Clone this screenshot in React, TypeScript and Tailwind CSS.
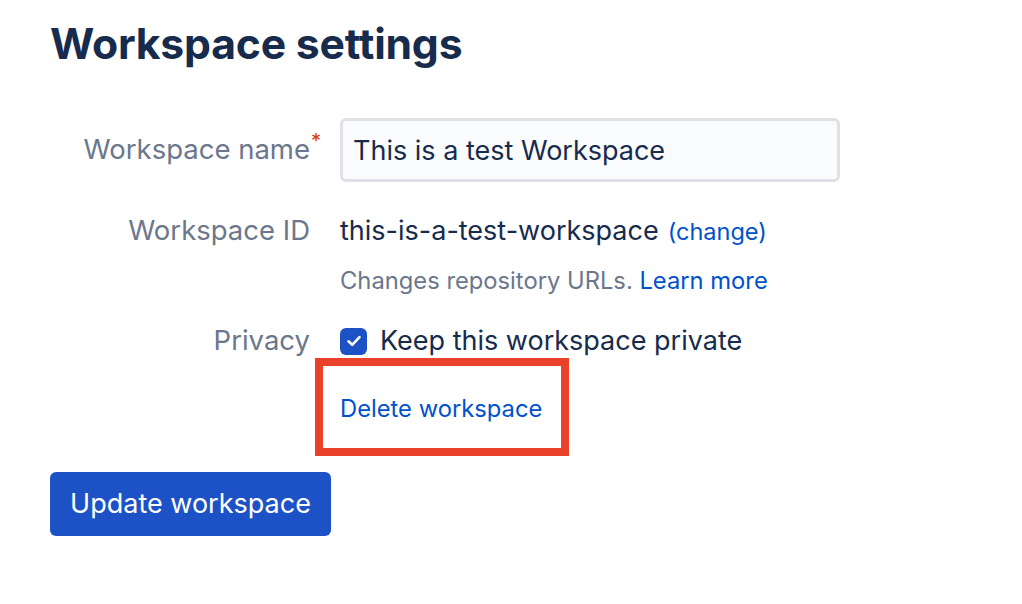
import React from 'react';

const labelCls = 'w-[260px] shrink-0 text-right text-[27.5px] text-[#6b778c]';

const App = () => {
    return (
        <div className="min-h-[604px] w-[1022px] bg-white pl-[50px] pt-[16px] font-['Inter',sans-serif] text-[#172b4d]">
            <h1 className="text-[42.7px] font-bold leading-[56px] tracking-[-0.2px]">Workspace settings</h1>

            <div className="mt-[46px] flex items-center gap-[30px]">
                <div className={labelCls}>
                    <span className="relative">
                        Workspace name
                        <span className="absolute -right-[11px] -top-[6px] text-[20px] text-[#de350b]">*</span>
                    </span>
                </div>
                <input
                    className="h-[64px] w-[500px] rounded-[6px] border-[3px] border-[#dfe1e6] bg-[#fafbfc] px-[10px] text-[27px] text-[#172b4d] outline-none"
                    defaultValue="This is a test Workspace"
                />
            </div>

            <div className="mt-[29px] flex h-[40px] items-center gap-[30px]">
                <div className={labelCls}>Workspace ID</div>
                <div className="flex items-baseline gap-[9px]">
                    <span className="text-[27px]">this-is-a-test-workspace</span>
                    <a href="#" className="text-[23.5px] text-[#0052cc]">(change)</a>
                </div>
            </div>

            <div className="mt-[14px] h-[32px] pl-[290px] text-[23.75px] leading-[32px] text-[#6b778c]">
                Changes repository URLs. <a href="#" className="text-[#0052cc]">Learn more</a>
            </div>

            <div className="mt-[24px] flex h-[40px] items-center gap-[30px]">
                <div className={labelCls}>Privacy</div>
                <label className="flex items-center gap-[13px] text-[27px]">
                    <span className="flex h-[27px] w-[27px] items-center justify-center rounded-[6px] bg-[#1d52c7]">
                        <svg width="20" height="20" viewBox="0 0 20 20" fill="none">
                            <path d="M4.5 10.3l3.7 3.5 7.3-7.6" stroke="white" strokeWidth="2.6" strokeLinecap="round" strokeLinejoin="round"/>
                        </svg>
                    </span>
                    Keep this workspace private
                </label>
            </div>

            <div className="mt-[32px] pl-[290px]">
                <div className="relative inline-block">
                    <a href="#" className="block h-[32px] text-[23.75px] leading-[32px] text-[#0052cc]">Delete workspace</a>
                    <div className="pointer-events-none absolute -left-[25px] -top-[35px] h-[98px] w-[254px] border-[8px] border-[#e9412a]"/>
                </div>
            </div>

            <button className="mt-[47px] h-[64px] w-[281px] rounded-[6px] bg-[#1d52c7] text-[27px] text-white">
                Update workspace
            </button>
        </div>
    );
};

export default App;
